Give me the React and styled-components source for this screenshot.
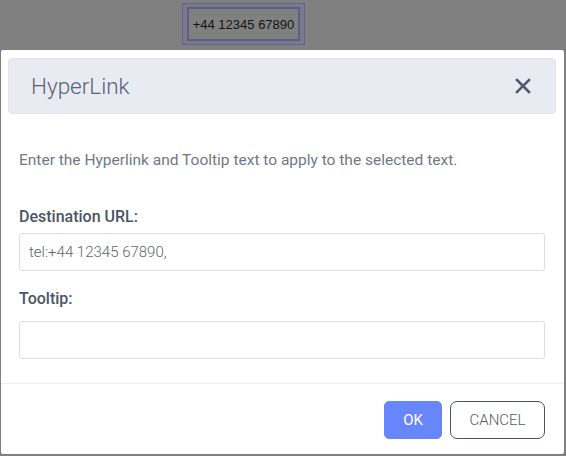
import React from "react";
import styled, { createGlobalStyle } from "styled-components";

const Global = createGlobalStyle`
  html, body {
    margin: 0;
    padding: 0;
    background: #808080;
    width: 566px;
    height: 456px;
    overflow: hidden;
  }
  * { box-sizing: border-box; }
`;

const Page = styled.div`
  width: 566px;
  height: 456px;
  display: flex;
  flex-direction: column;
`;

const Backdrop = styled.div`
  height: 50px;
  padding: 3px 0 0 182px;
`;

const PhoneFrame = styled.div`
  width: 123px;
  height: 42px;
  border: 1px solid #66648a;
  background: #7b7a8b;
  padding: 3px 4px;
`;

const PhoneText = styled.div`
  height: 34px;
  border: 2px solid #5f5d8c;
  background: #808080;
  display: flex;
  align-items: center;
  justify-content: center;
  font-family: "Liberation Sans", Arial, sans-serif;
  font-size: 13px;
  color: #141414;
`;

const Dialog = styled.div`
  margin: 0 2px 0 1px;
  height: 404px;
  background: #fff;
  border-radius: 2px;
  display: flex;
  flex-direction: column;
  font-family: Roboto, "Noto Sans", sans-serif;
`;

const Header = styled.div`
  margin: 8px 8px 0 7px;
  height: 56px;
  background: #e8ebf2;
  border: 1px solid #e1e4ec;
  border-radius: 4px;
  display: flex;
  align-items: center;
  justify-content: space-between;
  padding: 0 24px 0 22px;
`;

const Title = styled.h2`
  margin: 0;
  font-weight: 300;
  font-size: 22.5px;
  color: #5b6272;
`;

const Close = styled.button`
  border: 0;
  background: none;
  padding: 0;
  display: flex;
  color: #505a6a;
`;

const Body = styled.div`
  padding: 36px 19px 0 18px;
  display: flex;
  flex-direction: column;
`;

const Intro = styled.p`
  margin: 0 0 37px;
  font-size: 15.5px;
  font-weight: 400;
  line-height: 20px;
  color: #717885;
`;

const Label = styled.label`
  font-size: 16px;
  line-height: 20px;
  font-weight: 500;
  color: #4b5563;
  margin-bottom: ${(p) => p.$gap}px;
`;

const Field = styled.input`
  height: 38px;
  border: 1px solid #dcdcdc;
  border-radius: 3px;
  padding: 0 9px;
  font-family: Roboto, sans-serif;
  font-size: 15px;
  font-weight: 300;
  color: #5f636c;
  margin-bottom: ${(p) => p.$gap || 0}px;
  outline: none;
`;

const Footer = styled.div`
  margin-top: 24px;
  border-top: 1px solid #eeeeee;
  padding: 17px 19px 0 0;
  display: flex;
  justify-content: flex-end;
  gap: 8px;
`;

const Button = styled.button`
  height: 38px;
  padding: 0;
  width: ${(p) => (p.$primary ? 58 : 95)}px;
  border-radius: ${(p) => (p.$primary ? 5 : 7)}px;
  border: 1px solid ${(p) => (p.$primary ? "#6886fb" : "#4b5160")};
  background: ${(p) => (p.$primary ? "#6886fb" : "#fff")};
  color: ${(p) => (p.$primary ? "#fff" : "#555b66")};
  font-family: Roboto, sans-serif;
  font-size: 15px;
  font-weight: ${(p) => (p.$primary ? 400 : 300)};
`;

export default function App() {
  return (
    <>
      <Global />
      <Page>
        <Backdrop>
          <PhoneFrame>
            <PhoneText>+44 12345 67890</PhoneText>
          </PhoneFrame>
        </Backdrop>
        <Dialog>
          <Header>
            <Title>HyperLink</Title>
            <Close>
              <svg width="16" height="16" viewBox="0 0 16 16">
                <path d="M2 2 L14 14 M14 2 L2 14" stroke="currentColor" strokeWidth="2.6" strokeLinecap="square" />
              </svg>
            </Close>
          </Header>
          <Body>
            <Intro>Enter the Hyperlink and Tooltip text to apply to the selected text.</Intro>
            <Label $gap={6}>Destination URL:</Label>
            <Field defaultValue="tel:+44 12345 67890," $gap={18} />
            <Label $gap={12}>Tooltip:</Label>
            <Field defaultValue="" />
          </Body>
          <Footer>
            <Button $primary>OK</Button>
            <Button>CANCEL</Button>
          </Footer>
        </Dialog>
      </Page>
    </>
  );
}
